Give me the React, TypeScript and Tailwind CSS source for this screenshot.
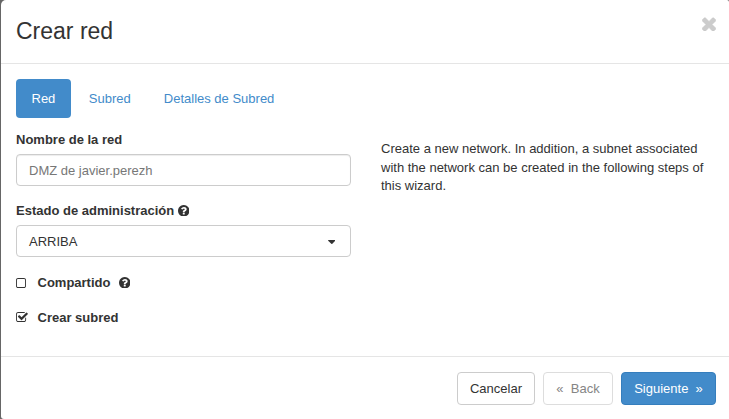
import React from "react";

type IconProps = { className?: string };

function TimesIcon({ className }: IconProps) {
  return (
    <svg className={className} viewBox="282 302 1228 1228" fill="currentColor" stroke="currentColor" strokeWidth="50" aria-hidden="true">
      <path d="M1490 1322q0 40-28 68l-136 136q-28 28-68 28t-68-28l-294-294-294 294q-28 28-68 28t-68-28l-136-136q-28-28-28-68t28-68l294-294-294-294q-28-28-28-68t28-68l136-136q28-28 68-28t68 28l294 294 294-294q28-28 68-28t68 28l136 136q28 28 28 68t-28 68l-294 294 294 294q28 28 28 68z" />
    </svg>
  );
}

function HelpIcon({ className }: IconProps) {
  return (
    <svg className={className} viewBox="128 128 1536 1536" fill="currentColor" aria-hidden="true">
      <path d="M1024 1376v-192q0-14-9-23t-23-9h-192q-14 0-23 9t-9 23v192q0 14 9 23t23 9h192q14 0 23-9t9-23zm256-672q0-88-55.5-163t-138.5-116-170-41q-243 0-371 213-15 24 8 42l132 100q7 6 19 6 16 0 25-12 53-68 86-92 34-24 86-24 48 0 85.5 26t37.5 59q0 38-20 61t-68 45q-63 28-115.5 86.5t-52.5 125.5v36q0 14 9 23t23 9h192q14 0 23-9t9-23q0-19 21.5-49.5t54.5-49.5q32-18 49-28.5t46-35 44.5-48 28-60.5 12.5-81zm384 192q0 209-103 385.5t-279.5 279.5-385.5 103-385.5-103-279.5-279.5-103-385.5 103-385.5 279.5-279.5 385.5-103 385.5 103 279.5 279.5 103 385.5z" />
    </svg>
  );
}

function SquareIcon({ className }: IconProps) {
  return (
    <svg className={className} viewBox="192 128 1408 1408" fill="currentColor" aria-hidden="true">
      <path d="M1312 256h-832q-66 0-113 47t-47 113v832q0 66 47 113t113 47h832q66 0 113-47t47-113v-832q0-66-47-113t-113-47zm288 160v832q0 119-84.5 203.5t-203.5 84.5h-832q-119 0-203.5-84.5t-84.5-203.5v-832q0-119 84.5-203.5t203.5-84.5h832q119 0 203.5 84.5t84.5 203.5z" />
    </svg>
  );
}

function CheckSquareIcon({ className }: IconProps) {
  return (
    <svg className={className} viewBox="192 128 1663 1408" fill="currentColor" aria-hidden="true">
      <g transform="translate(128 0)">
        <path d="M1472 930v318q0 119-84.5 203.5t-203.5 84.5h-832q-119 0-203.5-84.5t-84.5-203.5v-832q0-119 84.5-203.5t203.5-84.5h832q63 0 117 25 15 7 18 23 3 17-9 29l-49 49q-10 10-23 10-3 0-9-2-23-6-45-6h-832q-66 0-113 47t-47 113v832q0 66 47 113t113 47h832q66 0 113-47t47-113v-254q0-13 9-22l64-64q10-10 23-10 6 0 12 3 20 8 20 29zm231-489l-814 814q-24 24-57 24t-57-24l-430-430q-24-24-24-57t24-57l110-110q24-24 57-24t57 24l263 263 647-647q24-24 57-24t57 24l110 110q24 24 24 57t-24 57z" />
      </g>
    </svg>
  );
}

export default function App() {
  return (
    <div className="h-[419px] w-[729px] overflow-hidden bg-[#666] pl-px font-['Liberation_Sans',Arial,sans-serif] text-[13px] leading-[18.57px] text-[#333]">
      <div className="flex h-full flex-col rounded-tl-[5px] rounded-tr-[2px] rounded-bl-[3px] bg-white">
        <header className="flex h-16 items-start justify-between border-b border-[#e5e5e5] pt-[15px] pr-[13.5px] pl-[15px]">
          <h1 className="text-[23px] leading-[32px]">Crear red</h1>
          <TimesIcon className="mt-[1.5px] h-[14px] w-[14px] text-[#ccc]" />
        </header>
        <main className="flex h-[292px] flex-col px-[15px] pt-[15px]">
          <nav className="flex h-[39px] gap-[2px] text-[#428bca]">
            <a className="rounded-[4px] bg-[#428bca] px-[15.5px] pt-[11px] text-white">Red</a>
            <a className="px-[16px] pt-[11px]">Subred</a>
            <a className="px-[15px] pt-[11px]">Detalles de Subred</a>
          </nav>
          <div className="flex h-[139px] gap-[30px]">
            <form className="w-[335px] pt-[13px]">
              <label className="block h-[19px] font-bold">Nombre de la red</label>
              <div className="mt-[4px] h-8 rounded-[4px] border border-[#ccc] px-3 pt-[7px] text-[#777] shadow-[inset_0_1px_1px_rgba(0,0,0,0.075)]">DMZ de javier.perezh</div>
              <label className="mt-[16px] flex h-[18px] items-start gap-[3.5px] font-bold">
                Estado de administración
                <HelpIcon className="mt-[2.5px] h-[11.5px] w-[11.5px]" />
              </label>
              <div className="mt-[5px] flex h-8 items-start justify-between rounded-[4px] border border-[#ccc] pt-[7px] pr-[15px] pl-3">
                <span>ARRIBA</span>
                <svg className="mt-[7px] h-[4px] w-[7.5px]" viewBox="0 0 7.5 4" fill="currentColor" aria-hidden="true">
                  <path d="M.5 0H7q.7.2.3.8L4.3 3.7q-.5.4-1 0L.2.8Q-.2.2.5 0Z" />
                </svg>
              </div>
            </form>
            <p className="w-[330px] pt-[22px]">Create a new network. In addition, a subnet associated with the network can be created in the following steps of this wizard.</p>
          </div>
          <div className="mt-[17px] flex h-[19px] items-start font-bold">
            <SquareIcon className="mt-[4px] h-[10px] w-[10px]" />
            <span className="mr-[8.5px] ml-[11.5px]">Compartido</span>
            <HelpIcon className="mt-[2.5px] h-[11.5px] w-[11.5px]" />
          </div>
          <div className="mt-[16px] flex h-[19px] items-start font-bold">
            <CheckSquareIcon className="mt-[3px] h-[10px] w-[12px]" />
            <span className="ml-[9.5px]">Crear subred</span>
          </div>
        </main>
        <footer className="flex flex-1 items-start justify-end gap-2 border-t border-[#e5e5e5] pt-[15px] pr-[13px]">
          <button className="h-[33px] w-[78px] rounded-[4px] border border-[#ccc] pt-px">Cancelar</button>
          <button className="h-[33px] w-[70px] rounded-[4px] border border-[#ddd] pt-px text-[#858585]">«&nbsp; Back</button>
          <button className="h-[33px] w-[95px] rounded-[4px] border border-[#357ebd] bg-[#428bca] pt-px text-white">Siguiente&nbsp; »</button>
        </footer>
      </div>
    </div>
  );
}
